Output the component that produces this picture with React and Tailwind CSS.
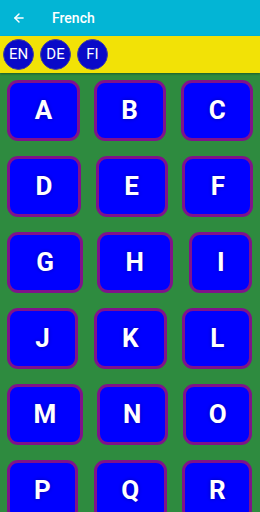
import { ArrowLeft } from "lucide-react";

const rows = [
  [
    { l: "A", c: "ml-[7px] w-[73px]" },
    { l: "B", c: "ml-[7px] w-[72px]" },
    { l: "C", c: "ml-[8px] w-[72px]" },
  ],
  [
    { l: "D", c: "ml-[7px] w-[74px]" },
    { l: "E", c: "ml-[9px] w-[72px]" },
    { l: "F", c: "ml-[9px] w-[71px]" },
  ],
  [
    { l: "G", c: "ml-[7px] w-[76px]" },
    { l: "H", c: "ml-[10px] w-[76px]" },
    { l: "I", c: "ml-[16px] w-[63px]" },
  ],
  [
    { l: "J", c: "ml-[7px] w-[71px]" },
    { l: "K", c: "ml-[7px] w-[73px]" },
    { l: "L", c: "ml-[9px] w-[70px]" },
  ],
  [
    { l: "M", c: "ml-[7px] w-[76px]" },
    { l: "N", c: "ml-[10px] w-[71px]" },
    { l: "O", c: "ml-[10px] w-[69px]" },
  ],
  [
    { l: "P", c: "ml-[7px] w-[71px]" },
    { l: "Q", c: "ml-[7px] w-[73px]" },
    { l: "R", c: "ml-[9px] w-[70px]" },
  ],
];

const langs = ["EN", "DE", "FI"];

export default function App() {
  return (
    <div className="w-[260px] h-[512px] overflow-hidden bg-[#2e8b3f] font-['Roboto',sans-serif]">
      {/* Toolbar */}
      <div className="h-[36px] bg-[#03b5d5] flex items-center text-white">
        <ArrowLeft className="ml-[12px] w-[14px] h-[14px]" strokeWidth={2.5} />
        <span className="ml-[26px] text-[14px] font-medium">French</span>
      </div>

      {/* Languages */}
      <div className="h-[37px] bg-[#f2e206] flex items-center gap-[6px] pl-[3px] shadow-[0_1px_2px_rgba(0,0,0,0.35)]">
        {langs.map((l) => (
          <div
            key={l}
            className="w-[31px] h-[31px] rounded-full bg-[#0a0ac8] border border-[#4040a0] flex items-center justify-center text-white text-[15px]"
          >
            {l}
          </div>
        ))}
      </div>

      {/* Letters */}
      <div className="flex flex-col gap-[15px] pt-[7px]">
        {rows.map((row, i) => (
          <div key={i} className="grid grid-cols-3">
            {row.map((b) => (
              <div key={b.l}>
                <div
                  className={`${b.c} h-[61px] rounded-[11px] bg-[#0000ff] border-[3px] border-[#80128a] flex items-center justify-center text-white text-[26px] font-bold [text-shadow:0_0_4px_#0000b0]`}
                >
                  {b.l}
                </div>
              </div>
            ))}
          </div>
        ))}
      </div>
    </div>
  );
}
